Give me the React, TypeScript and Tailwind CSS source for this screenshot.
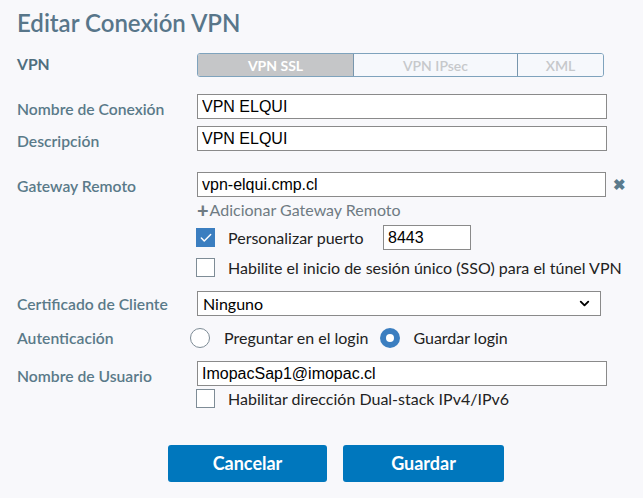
import { ChevronDown, Check } from "lucide-react";

const labelText = "shrink-0 text-[15.7px] font-semibold text-[#5a7a89]";
const label = "w-[180px] " + labelText;
const inputCls =
  "h-[25px] border border-[#8a8a8a] bg-white px-[4px] text-[16px] text-black outline-none font-['Liberation_Sans',Arial,sans-serif]";

const Box = ({ checked }: { checked?: boolean }) =>
  checked ? (
    <span className="flex h-[19px] w-[19px] items-center justify-center bg-[#3b7ec0]">
      <Check size={14} strokeWidth={2.5} className="text-white" />
    </span>
  ) : (
    <span className="h-[19px] w-[19px] border border-[#7e8c96] bg-white" />
  );

export default function App() {
  return (
    <div className="h-[498px] w-[643px] overflow-hidden bg-[#f8f8fb] pl-[17px] font-['Lato',sans-serif] text-[#222]">
      <h1 className="pt-[7px] text-[24px] font-semibold leading-[32px] text-[#58768a]">
        Editar Conexión VPN
      </h1>

      <div className="mt-[14px] flex h-[24px] items-center">
        <span className="w-[180px] shrink-0 text-[15.7px] font-bold text-[#4f6e7e]">VPN</span>
        <div className="flex h-[24px] overflow-hidden rounded-[3px] border border-[#7fa3bd] text-[14px] font-bold">
          <div className="flex w-[155px] items-center justify-center bg-[#c5c6c8] text-white">VPN SSL</div>
          <div className="flex w-[164px] items-center justify-center border-l border-[#7896ad] bg-[#f6f8fc] font-semibold text-[#c6c8cb]">VPN IPsec</div>
          <div className="flex w-[86px] items-center justify-center border-l border-[#7896ad] bg-[#f6f8fc] font-semibold text-[#c6c8cb]">XML</div>
        </div>
      </div>

      <div className="mt-[17px] flex h-[25px] items-center">
        <span className={label + " pt-[7px]"}>Nombre de Conexión</span>
        <input className={inputCls + " w-[410px]"} defaultValue="VPN ELQUI" />
      </div>
      <div className="mt-[7px] flex h-[25px] items-center">
        <span className={label + " pt-[7px]"}>Descripción</span>
        <input className={inputCls + " w-[410px]"} defaultValue="VPN ELQUI" />
      </div>

      <div className="mt-[21px] flex h-[25px] items-center">
        <span className={label + " pt-[4px]"}>Gateway Remoto</span>
        <input className={inputCls + " w-[409px]"} defaultValue="vpn-elqui.cmp.cl" />
        <span className="ml-[7px] text-[15px] font-bold leading-none text-[#5a7a8c]">✖</span>
      </div>
      <div className="mt-[3px] flex h-[20px] items-center pl-[180px] text-[16px] text-[#6f7b83]">
        <span className="mr-[1px] text-[20px] font-black leading-none">+</span>Adicionar Gateway Remoto
      </div>

      <div className="mt-[5px] flex h-[25px] items-center pl-[179px]">
        <Box checked />
        <span className="ml-[13px] w-[155px] text-[16px]">Personalizar puerto</span>
        <input className={inputCls + " w-[88px]"} defaultValue="8443" />
      </div>
      <div className="mt-[6px] flex h-[23px] items-center pl-[179px]">
        <Box />
        <span className="ml-[13px] text-[16px]">Habilite el inicio de sesión único (SSO) para el túnel VPN</span>
      </div>

      <div className="mt-[12px] flex h-[25px] items-center">
        <span className={label + " pt-[2px]"}>Certificado de Cliente</span>
        <div className="flex h-[25px] w-[404px] items-center justify-between border border-[#8a8a8a] bg-white pl-[5px] pr-[8px] text-[16px] text-black">
          Ninguno
          <ChevronDown size={15} strokeWidth={3} />
        </div>
      </div>

      <div className="mt-[9px] flex h-[26px] items-center">
        <span className={"w-[173px] pt-[2px] " + labelText}>Autenticación</span>
        <span className="h-[20px] w-[20px] shrink-0 rounded-full border border-[#7e8c96] bg-white" />
        <span className="ml-[14px] text-[16px]">Preguntar en el login</span>
        <span className="ml-[12px] flex h-[20px] w-[20px] shrink-0 items-center justify-center rounded-full bg-[#3b7ec0]">
          <span className="h-[8px] w-[8px] rounded-full bg-white" />
        </span>
        <span className="ml-[13px] text-[16px]">Guardar login</span>
      </div>

      <div className="mt-[10px] flex h-[25px] items-center">
        <span className={label + " pt-[7px]"}>Nombre de Usuario</span>
        <input className={inputCls + " w-[410px]"} defaultValue="ImopacSap1@imopac.cl" />
      </div>
      <div className="mt-[3px] flex h-[19px] items-center pl-[179px]">
        <Box />
        <span className="ml-[13px] text-[16px]">Habilitar dirección Dual-stack IPv4/IPv6</span>
      </div>

      <div className="mt-[37px] flex gap-[16px] pl-[151px]">
        <button className="h-[37px] w-[159px] rounded-[3px] bg-[#0077bd] text-[18px] font-bold text-white">Cancelar</button>
        <button className="h-[37px] w-[161px] rounded-[3px] bg-[#0077bd] text-[18px] font-bold text-white">Guardar</button>
      </div>
    </div>
  );
}
